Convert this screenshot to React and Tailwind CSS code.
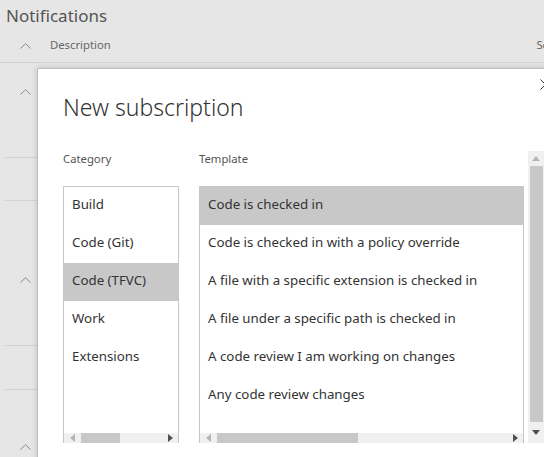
import React from 'react';

const categories = ['Build', 'Code (Git)', 'Code (TFVC)', 'Work', 'Extensions'];
const templates = [
  'Code is checked in',
  'Code is checked in with a policy override',
  'A file with a specific extension is checked in',
  'A file under a specific path is checked in',
  'A code review I am working on changes',
  'Any code review changes',
];

const Chevron = () => (
  <svg width="11" height="6" viewBox="0 0 11 6" fill="none">
    <path d="M0.5 5.5 L5.5 0.7 L10.5 5.5" stroke="#8a8a8a" strokeWidth="1" />
  </svg>
);

const HScroll = ({ thumbLeft, thumbWidth }) => (
  <div className="relative h-[10px] bg-[#f0f0f0] flex items-center">
    <svg className="absolute left-[6px]" width="5" height="8" viewBox="0 0 5 8">
      <path d="M5 0 L0 4 L5 8 Z" fill="#b4b4b4" />
    </svg>
    <div className="absolute top-0 h-[10px] bg-[#c8c8c8]" style={{ left: thumbLeft, width: thumbWidth }} />
    <svg className="absolute right-[5px]" width="5" height="8" viewBox="0 0 5 8">
      <path d="M0 0 L5 4 L0 8 Z" fill="#505050" />
    </svg>
  </div>
);

const ListBox = ({ items, selected, width, thumbLeft, thumbWidth }) => (
  <div className="flex flex-col h-[257px] border-t border-x border-[#c6c6c6] bg-white" style={{ width }}>
    <div className="flex-1 overflow-hidden">
      {items.map((it, i) => (
        <div
          key={it}
          className={`h-[38px] flex items-center pl-[8px] pb-[2px] whitespace-nowrap text-[13.3px] text-[#333] ${i === selected ? 'bg-[#c8c8c8]' : ''}`}
        >
          {it}
        </div>
      ))}
    </div>
    <HScroll thumbLeft={thumbLeft} thumbWidth={thumbWidth} />
  </div>
);

export default function App() {
  return (
    <div className="relative w-[544px] h-[457px] overflow-hidden bg-[#e6e6e6]" style={{ fontFamily: '"Noto Sans", "Open Sans", sans-serif' }}>
      {/* page behind the dialog */}
      <div className="h-[30px] pl-[6px] pt-[4px] text-[17px] leading-[24px] text-[#555]">Notifications</div>
      <div className="h-[33px] flex items-center border-b border-[#d2d2d2] text-[11.3px] text-[#666]">
        <div className="pl-[20px] w-[50px] flex"><Chevron /></div>
        <span className="flex-1 pb-[1px]">Description</span>
        <span className="pb-[1px] -mr-[5px]">Se</span>
      </div>
      <div className="ml-[5px]">
        <div className="h-[95px] border-b border-[#d2d2d2] pl-[15px] pt-[26px]"><Chevron /></div>
        <div className="h-[43px] border-b border-[#d2d2d2]" />
        <div className="h-[145px] border-b border-[#d2d2d2] pl-[15px] pt-[76px]"><Chevron /></div>
        <div className="h-[44px] border-b border-[#d2d2d2]" />
        <div className="h-[60px] pl-[15px] pt-[54px]"><Chevron /></div>
      </div>

      {/* dialog */}
      <div className="absolute left-[37px] top-[68px] w-[530px] h-[420px] bg-white border-l border-t border-[#bdbdbd] shadow-[0_0_6px_rgba(0,0,0,0.18)]">
        <svg className="absolute left-[502px] top-[10px]" width="11" height="11" viewBox="0 0 11 11">
          <path d="M0.5 0.5 L10.5 10.5 M10.5 0.5 L0.5 10.5" stroke="#333" strokeWidth="1" />
        </svg>
        <div className="pl-[25px] pt-[21px]">
          <h1 className="text-[23px] leading-[35px] font-light text-[#333]">New subscription</h1>
          <div className="mt-[26px] flex">
            <div className="w-[116px]">
              <div className="h-[16px] text-[11.3px] leading-[16px] text-[#555]">Category</div>
              <div className="mt-[19px]">
                <ListBox items={categories} selected={2} width={116} thumbLeft={17} thumbWidth={39} />
              </div>
            </div>
            <div className="w-[325px] ml-[20px]">
              <div className="h-[16px] text-[11.3px] leading-[16px] text-[#555]">Template</div>
              <div className="mt-[19px]">
                <ListBox items={templates} selected={0} width={325} thumbLeft={17} thumbWidth={141} />
              </div>
            </div>
            <div className="ml-[4px] w-[16px] h-[292px] bg-[#f0f0f0] flex flex-col items-center">
              <div className="h-[15px] flex items-center justify-center">
                <svg width="8" height="5" viewBox="0 0 8 5"><path d="M0 5 L4 0 L8 5 Z" fill="#b4b4b4" /></svg>
              </div>
              <div className="w-[13px] h-[256px] bg-[#c8c8c8] ml-[1px]" />
              <div className="flex-1 flex items-center justify-center">
                <svg width="8" height="5" viewBox="0 0 8 5"><path d="M0 0 L8 0 L4 5 Z" fill="#505050" /></svg>
              </div>
            </div>
          </div>
        </div>
      </div>
    </div>
  );
}
